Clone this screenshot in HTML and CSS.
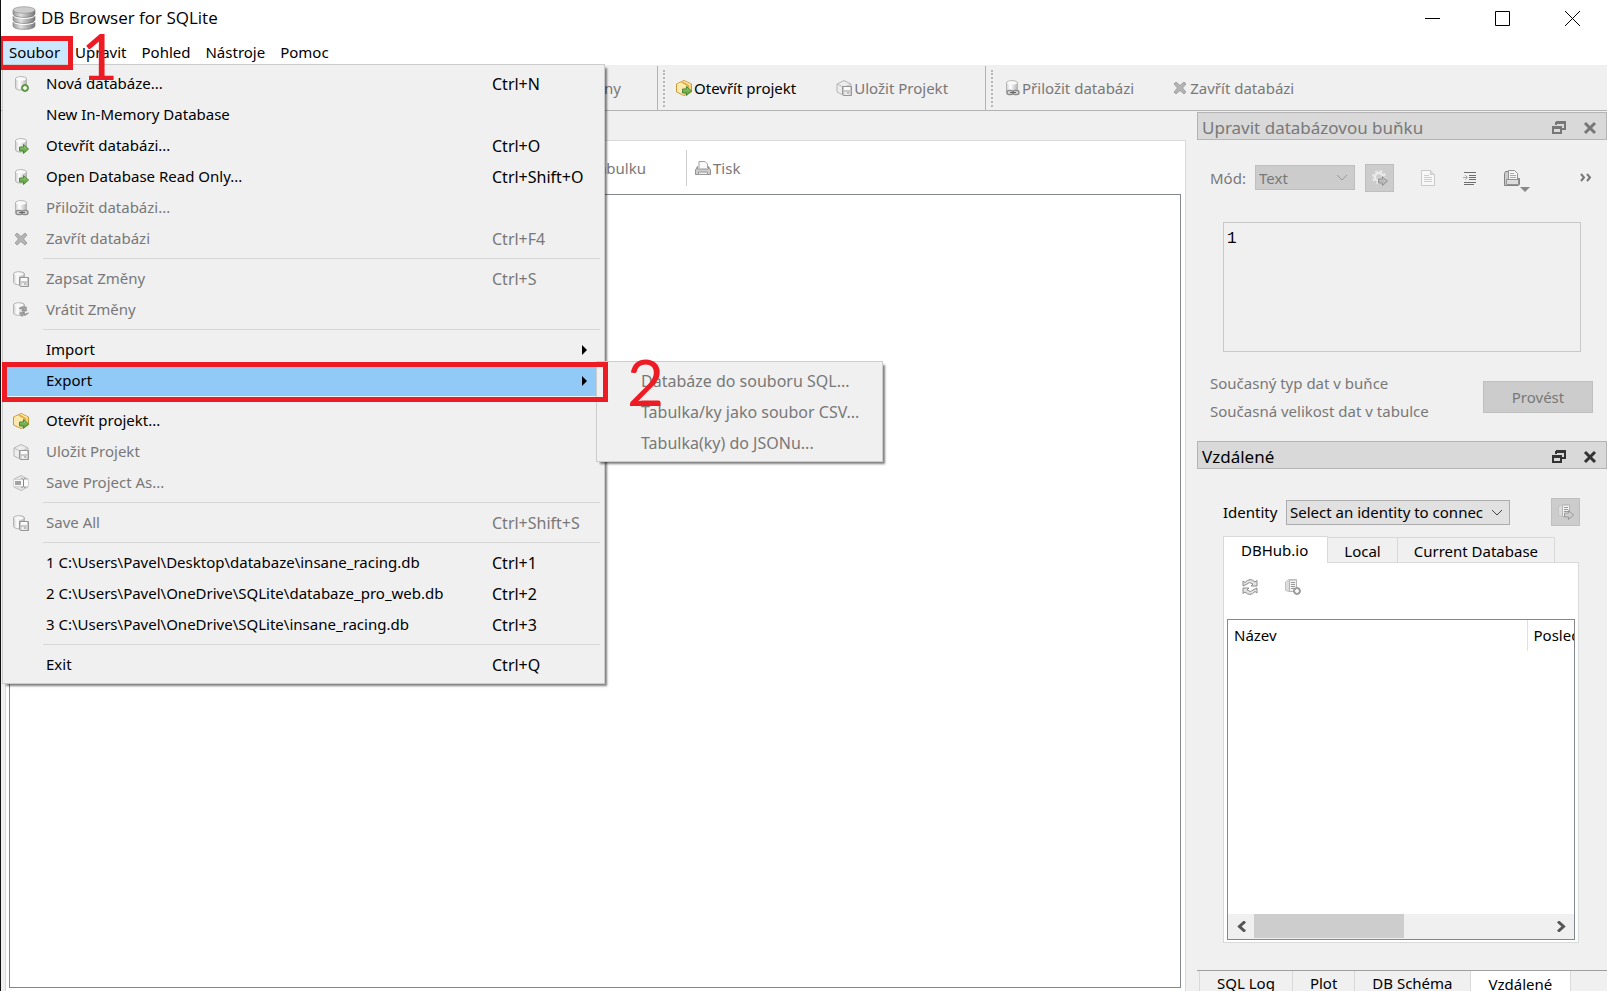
FILE: index.html
```html
<!DOCTYPE html>
<html lang="cs">
<head>
<meta charset="utf-8">
<title>DB Browser for SQLite</title>
<link rel="stylesheet" href="styles.css">
</head>
<body>
<svg class="defs" aria-hidden="true">
  <defs>
    <linearGradient id="metal"><stop offset="0" stop-color="#9a9a9a"/><stop offset=".35" stop-color="#e0e0e0"/><stop offset="1" stop-color="#777"/></linearGradient>
    <linearGradient id="pale"><stop offset="0" stop-color="#d0d0d0"/><stop offset=".35" stop-color="#fff"/><stop offset="1" stop-color="#b4b4b4"/></linearGradient>
    <linearGradient id="green" x2="0" y2="1"><stop offset="0" stop-color="#9ccb7c"/><stop offset="1" stop-color="#4f9a35"/></linearGradient>
    <symbol id="cyl" viewBox="0 0 16 16"><path d="M2.500 2.800v9c0 3 11 3 11 0v-9c0-2.800-11-2.800-11 0z" fill="url(#pale)" stroke="#b4b4b4"/><ellipse cx="8" cy="3" rx="5" ry="1.700" fill="#fafafa"/></symbol>
    <symbol id="arrow" viewBox="0 0 16 16"><path d="M6.500 9h4V6.500l5 4.500-5 4.500V13h-4z" fill="url(#green)" stroke="#4a8a36"/></symbol>
    <symbol id="floppy" viewBox="0 0 16 16"><path d="M6.500 6.500h9v9h-8l-1-1z" fill="#c9c9c9" stroke="#969696"/><path d="M8 7h6v3H8z" fill="#fafafa"/><path d="M8.500 12h5v3h-5z" fill="#eee"/><path d="M11.500 12h1v2h-1z" fill="#888"/></symbol>
    <symbol id="db-new" viewBox="0 0 16 16"><use href="#cyl"/><circle cx="12" cy="12" r="3.400" fill="#79ad5c" stroke="#4d8237"/><path d="M12 10v4m-2-2h4" stroke="#fff" stroke-width="1.400"/></symbol>
    <symbol id="db-open" viewBox="0 0 16 16"><use href="#cyl"/><use href="#arrow"/></symbol>
    <symbol id="db-link" viewBox="0 0 16 16"><use href="#cyl"/><g fill="#ddd" stroke="#8c8c8c" stroke-width="1.400"><rect x="3" y="10.500" width="6" height="4" rx="2"/><rect x="9" y="10.500" width="6" height="4" rx="2"/></g><path d="M6 12.500h6" stroke="#666"/></symbol>
    <symbol id="db-save" viewBox="0 0 16 16"><path d="M.5 3v8.500c1 2 3 2 6 2.500V6h5V3c0-3-11-3-11 0z" fill="url(#pale)" stroke="#b4b4b4"/><ellipse cx="6" cy="3" rx="4.500" ry="1.500" fill="#f8f8f8"/><use href="#floppy"/></symbol>
    <symbol id="db-revert" viewBox="0 0 16 16"><path d="M.5 3v8.500c1 2 9 3 11 0V3c0-3-11-3-11 0z" fill="url(#pale)" stroke="#b4b4b4"/><ellipse cx="6" cy="3" rx="4.500" ry="1.500" fill="#f8f8f8"/><path d="M6 6.500q4-3 6-.5l1-1.500.5 4.500-4.500-.5 1.500-1Q8 6 6 6.500zM15.500 11q-3 3.500-6 2l-.5 1.500-2.500-3.500 4.500-1-.5 1.500q2 1 5-.5z" fill="#a8a8a8" stroke="#848484" stroke-width=".7"/></symbol>
    <symbol id="cross" viewBox="0 0 16 16"><path d="M2 4 4 2l4 3.500L12 2l2 2-3.500 4L14 12l-2 2-4-3.500L4 14l-2-2 3.500-4z" fill="#b4b4b4" stroke="#959595" stroke-width=".8"/></symbol>
    <symbol id="box-open" viewBox="0 0 16 16"><path d="M8 .5 15.500 4v8L8 15.500.5 12V4z" fill="#f6d47c" stroke="#c99b35"/><path d="M1 4.500 8 8v7l-7-3.500z" fill="#fce9b2"/><path d="M1 4.200 8 1l7 3.200L8 8z" fill="#ffebb0"/><path d="m5 2.500 6 3.500v3l2-1V5L7 1.600z" fill="#e3ad43"/><use href="#arrow"/></symbol>
    <symbol id="box-save" viewBox="0 0 16 16"><path d="M8 .5 15 4v8l-7 3.500L1 12V4z" fill="#ededed" stroke="#b5b5b5"/><path d="m1 4 7 3.500L15 4M8 7v8" fill="none" stroke="#bcbcbc"/><use href="#floppy"/></symbol>
    <symbol id="box-edit" viewBox="0 0 16 16"><path d="M8 .5 15 4v8l-7 3.500L1 12V4z" fill="#e4e4e4" stroke="#bcbcbc"/><path d="M.5 4.500h15v7H.5z" fill="#fafafa" stroke="#d2d2d2"/><path d="M2 6h6v4H2z" fill="#a2a2a2"/><path d="M8.500 3.500h1l1 1 1-1h1m-2 1v7m-2 1h1l1-1 1 1h1" fill="none" stroke="#878787"/></symbol>
    <symbol id="printer" viewBox="0 0 16 16"><path d="M4 8V1.500h6l2.500 2.500v4" fill="#fafafa" stroke="#a0a0a0"/><path d="M2.500 6.500.5 10v4.500h15V10l-2-3.500V9h-11z" fill="#cecece" stroke="#929292"/><path d="M3.500 12h9v2.500h-9z" fill="#eee" stroke="#999"/></symbol>
    <symbol id="page" viewBox="0 0 16 16"><path d="M1.500.5h9l4 4v11h-13z" fill="#f8f8f8" stroke="#cacaca"/><path d="M10.500.5v4h4" fill="#ddd" stroke="#cacaca"/><path d="M4 5.500h5m-5 2h8m-8 2h8m-8 2h8" stroke="#cdcdcd"/></symbol>
    <symbol id="indent" viewBox="0 0 16 16"><path d="M2 2.500h12m-7 3h7m-7 2h7m-7 2h7m-12 3h12m-12 2h10" stroke="#6d6d6d" stroke-width="1.200"/><path d="M1 7.500h4M3 5l2.500 2.500L3 10" fill="none" stroke="#aaa"/></symbol>
    <symbol id="folder-print" viewBox="0 0 16 16"><path d="M.5 15.500v-12l1-2h4v7h10v6l-1 1z" fill="#ccc" stroke="#838383"/><path d="M4.500 9.500v-9h6l3 3v6" fill="#f7f7f7" stroke="#929292"/><path d="M6 3.500h4m-4 2h6m-6 2h6" stroke="#aaa"/><path d="M2.500 9.500h12v5h-12z" fill="#ddd" stroke="#929292"/></symbol>
    <symbol id="gear" viewBox="0 0 16 16"><circle cx="7" cy="7" r="6" fill="none" stroke="#e8e8e8" stroke-width="2" stroke-dasharray="2.700 2"/><circle cx="7" cy="7" r="4" fill="#d0d0d0" stroke="#eee" stroke-width="2"/><path d="M6.500 9h4V6.500l5 4.500-5 4.500V13h-4z" fill="#bbb" stroke="#929292"/></symbol>
    <symbol id="server" viewBox="0 0 16 16"><path d="M.5 3 4 .5h7.500v12H4l-3.500-1z" fill="#dcdcdc" stroke="#c2c2c2"/><path d="M4.500 1h7v11.500h-7z" fill="#f1f1f1" stroke="#b4b4b4"/><path d="M6 3.500h4m-4 2h4m-4 2h4m-4 2h3" stroke="#999"/></symbol>
    <symbol id="server-open" viewBox="0 0 16 16"><use href="#server"/><path d="M6.500 9h4V6.500l5 4.500-5 4.500V13h-4z" fill="#ccc" stroke="#999"/></symbol>
    <symbol id="server-add" viewBox="0 0 16 16"><use href="#server"/><circle cx="12" cy="12" r="3.400" fill="#aaa" stroke="#909090"/><path d="M12 10v4m-2-2h4" stroke="#fff" stroke-width="1.500"/></symbol>
    <symbol id="refresh" viewBox="0 0 16 16"><path d="M1 7V2l2 1.500Q8-2 13 3l2-1.500V7H9l2-2Q7 2 5 5zM15 9v5l-2-1.500Q8 18 3 13l-2 1.500V9h6l-2 2q4 3 6 0z" fill="#e4e4e4" stroke="#8c8c8c"/></symbol>
    <symbol id="float" viewBox="0 0 14 14"><path d="M4 1h9v7H9M4 1v3m0-2h9" fill="none" stroke="currentColor" stroke-width="2"/><path d="M1 6h8v6H1zM1 7h8" fill="none" stroke="currentColor" stroke-width="2"/></symbol>
    <symbol id="close" viewBox="0 0 14 14"><path d="m2 2 10 10M12 2 2 12" stroke="currentColor" stroke-width="3"/></symbol>
  </defs>
</svg>

<div class="window">
  <header class="titlebar">
    <svg class="logo" viewBox="0 0 24 24"><g fill="url(#metal)" stroke="#777" stroke-width=".6"><path d="M1 16v4c0 4.500 22 4.500 22 0v-4z"/><path d="M1 10v4c0 4.500 22 4.500 22 0v-4z"/><path d="M1 4v4c0 4.500 22 4.500 22 0V4z"/></g><path d="M1 9.500c2 4 20 4 22 0M1 15.500c2 4 20 4 22 0" fill="none" stroke="#fff"/><ellipse cx="12" cy="4" rx="11" ry="3.300" fill="#ccc" stroke="#8a8a8a" stroke-width=".6"/></svg>
    <h1 class="title">DB Browser for SQLite</h1>
    <div class="winbtns">
      <button class="winbtn" aria-label="Minimalizovat"><svg viewBox="0 0 15 15"><path d="M0 7.500h15"/></svg></button>
      <button class="winbtn" aria-label="Maximalizovat"><svg viewBox="0 0 15 15"><path d="M.5.5h14v14H.5z"/></svg></button>
      <button class="winbtn" aria-label="Zavřít"><svg viewBox="0 0 15 15"><path d="m0 0 15 15M15 0 0 15"/></svg></button>
    </div>
  </header>
  <nav class="menubar">
    <button class="menubtn open">Soubor</button>
    <button class="menubtn">Upravit</button>
    <button class="menubtn">Pohled</button>
    <button class="menubtn">Nástroje</button>
    <button class="menubtn">Pomoc</button>
  </nav>
  <div class="toolbar">
    <div class="group first"><button class="tool" disabled>Vrátit Změny</button></div>
    <div class="group project">
      <button class="tool"><svg class="ico"><use href="#box-open"/></svg>Otevřít projekt</button>
      <button class="tool" disabled><svg class="ico"><use href="#box-save"/></svg>Uložit Projekt</button>
    </div>
    <div class="group attach">
      <button class="tool" disabled><svg class="ico"><use href="#db-link"/></svg>Přiložit databázi</button>
      <button class="tool" disabled><svg class="ico"><use href="#cross"/></svg>Zavřít databázi</button>
    </div>
  </div>

  <div class="body">
    <main class="pane">
      <div class="panebar">
        <div class="panefirst"><button class="tool" disabled>Upravit tabulku</button></div>
        <button class="tool" disabled><svg class="ico"><use href="#printer"/></svg>Tisk</button>
      </div>
      <div class="tree"></div>
    </main>

    <aside class="docks">
      <section class="dock off">
        <h2 class="dockhead"><span class="docktitle">Upravit databázovou buňku</span>
          <button class="dockbtn" aria-label="Uvolnit"><svg><use href="#float"/></svg></button><button class="dockbtn" aria-label="Zavřít panel"><svg><use href="#close"/></svg></button></h2>
        <div class="moderow">
          <label for="mode">Mód:</label>
          <span class="combo mode"><select id="mode" disabled><option>Text</option></select><svg class="chev" viewBox="0 0 12 7"><path d="m1 1 5 5 5-5"/></svg></span>
          <button class="sq" disabled aria-label="Použít režim"><svg class="ico"><use href="#gear"/></svg></button>
          <div class="cellicons">
            <button class="flat" disabled aria-label="Stránka"><svg class="ico"><use href="#page"/></svg></button>
            <button class="flat" disabled aria-label="Odsazení"><svg class="ico"><use href="#indent"/></svg></button>
            <button class="flat" disabled aria-label="Tisk buňky"><svg class="ico"><use href="#folder-print"/></svg><svg class="drop" viewBox="0 0 10 6"><path d="M0 0h10L5 5z"/></svg></button>
          </div>
          <button class="flat more" disabled aria-label="Další"><svg viewBox="0 0 12 9"><path d="m1 1 3 3.500L1 8m6-7 3 3.500L7 8"/></svg></button>
        </div>
        <textarea class="cell" aria-label="Hodnota buňky" readonly>1</textarea>
        <div class="applyrow">
          <div class="info"><p>Současný typ dat v buňce</p><p>Současná velikost dat v tabulce</p></div>
          <button class="apply" disabled>Provést</button>
        </div>
      </section>

      <section class="dock remote">
        <h2 class="dockhead"><span class="docktitle">Vzdálené</span>
          <button class="dockbtn" aria-label="Uvolnit"><svg><use href="#float"/></svg></button><button class="dockbtn" aria-label="Zavřít panel"><svg><use href="#close"/></svg></button></h2>
        <div class="idrow">
          <label for="ident">Identity</label>
          <span class="combo ident"><select id="ident"><option>Select an identity to connect</option></select><svg class="chev" viewBox="0 0 12 7"><path d="m1 1 5 5 5-5"/></svg></span>
          <button class="sq" disabled aria-label="Nahrát"><svg class="ico"><use href="#server-open"/></svg></button>
        </div>
        <div class="tabs">
          <button class="tab active">DBHub.io</button><button class="tab">Local</button><button class="tab">Current Database</button>
        </div>
        <div class="tabpane">
          <div class="remotebar">
            <button class="flat" disabled aria-label="Obnovit"><svg class="ico"><use href="#refresh"/></svg></button>
            <button class="flat" disabled aria-label="Klonovat"><svg class="ico"><use href="#server-add"/></svg></button>
          </div>
          <div class="list">
            <div class="listview"><table><thead><tr><th class="name">Název</th><th>Poslední</th></tr></thead></table></div>
            <div class="scroll">
              <button class="sbtn" aria-label="Doleva"><svg viewBox="0 0 9 11"><path d="M8 .5 2.500 5.500 8 10.500"/></svg></button>
              <div class="track"><div class="thumb"></div></div>
              <button class="sbtn" aria-label="Doprava"><svg viewBox="0 0 9 11"><path d="m1 .5 5.500 5L1 10.500"/></svg></button>
            </div>
          </div>
        </div>
      </section>
      <div class="bottomtabs">
        <button class="btab">SQL Log</button><button class="btab">Plot</button><button class="btab">DB Schéma</button><button class="btab active">Vzdálené</button>
      </div>
    </aside>
  </div>

  <div class="popup file" role="menu">
    <button class="item"><svg class="ico"><use href="#db-new"/></svg><span class="lbl">Nová databáze...</span><span class="key">Ctrl+N</span></button>
    <button class="item"><span class="lbl">New In-Memory Database</span></button>
    <button class="item"><svg class="ico"><use href="#db-open"/></svg><span class="lbl">Otevřít databázi...</span><span class="key">Ctrl+O</span></button>
    <button class="item"><svg class="ico"><use href="#db-open"/></svg><span class="lbl">Open Database Read Only...</span><span class="key">Ctrl+Shift+O</span></button>
    <button class="item" disabled><svg class="ico"><use href="#db-link"/></svg><span class="lbl">Přiložit databázi...</span></button>
    <button class="item" disabled><svg class="ico"><use href="#cross"/></svg><span class="lbl">Zavřít databázi</span><span class="key">Ctrl+F4</span></button>
    <hr>
    <button class="item" disabled><svg class="ico"><use href="#db-save"/></svg><span class="lbl">Zapsat Změny</span><span class="key">Ctrl+S</span></button>
    <button class="item" disabled><svg class="ico"><use href="#db-revert"/></svg><span class="lbl">Vrátit Změny</span></button>
    <hr>
    <button class="item"><span class="lbl">Import</span><svg class="sub" viewBox="0 0 5 10"><path d="m0 0 5 5-5 5z"/></svg></button>
    <button class="item hover"><span class="lbl">Export</span><svg class="sub" viewBox="0 0 5 10"><path d="m0 0 5 5-5 5z"/></svg></button>
    <hr>
    <button class="item"><svg class="ico"><use href="#box-open"/></svg><span class="lbl">Otevřít projekt...</span></button>
    <button class="item" disabled><svg class="ico"><use href="#box-save"/></svg><span class="lbl">Uložit Projekt</span></button>
    <button class="item" disabled><svg class="ico"><use href="#box-edit"/></svg><span class="lbl">Save Project As...</span></button>
    <hr>
    <button class="item" disabled><svg class="ico"><use href="#db-save"/></svg><span class="lbl">Save All</span><span class="key">Ctrl+Shift+S</span></button>
    <hr>
    <button class="item"><span class="lbl">1 C:\Users\Pavel\Desktop\databaze\insane_racing.db</span><span class="key">Ctrl+1</span></button>
    <button class="item"><span class="lbl">2 C:\Users\Pavel\OneDrive\SQLite\databaze_pro_web.db</span><span class="key">Ctrl+2</span></button>
    <button class="item"><span class="lbl">3 C:\Users\Pavel\OneDrive\SQLite\insane_racing.db</span><span class="key">Ctrl+3</span></button>
    <hr>
    <button class="item"><span class="lbl">Exit</span><span class="key">Ctrl+Q</span></button>
  </div>
  <div class="popup export" role="menu">
    <button class="item" disabled><span class="lbl">Databáze do souboru SQL...</span></button>
    <button class="item" disabled><span class="lbl">Tabulka/ky jako soubor CSV...</span></button>
    <button class="item" disabled><span class="lbl">Tabulka(ky) do JSONu...</span></button>
  </div>
  <div class="mark mark1"></div><span class="num num1">1</span>
  <div class="mark mark2"></div><span class="num num2">2</span>
</div>
</body>
</html>
```
FILE: styles.css
```css
* { box-sizing: border-box; }
body {
  margin: 0;
  font: 15px/20px "Noto Sans", sans-serif;
  color: #000;
  background: #f0f0f0;
}
button, select, textarea { font: inherit; color: inherit; margin: 0; }
button { background: none; border: 0; padding: 0; white-space: nowrap; }
h1, h2, p { margin: 0; font-weight: 400; }
svg { display: block; flex: none; }
.defs { position: absolute; width: 0; height: 0; }
.ico { width: 16px; height: 16px; }

.window {
  position: relative;
  display: flex;
  flex-direction: column;
  height: 100vh;
  overflow: hidden;
  border-left: 1px solid #111;
}

/* title bar and menu bar */
.titlebar { display: flex; align-items: center; height: 36px; padding-left: 11px; background: #fff; }
.logo { width: 24px; height: 24px; }
.title { flex: 1; margin-left: 5px; font: 17px/24px "Open Sans", sans-serif; }
.winbtns { display: flex; }
.winbtn { display: flex; justify-content: center; align-items: center; width: 70px; height: 34px; }
.winbtn svg { width: 15px; height: 15px; fill: none; stroke: #000; }
.menubar { display: flex; height: 30px; background: #fff; border-bottom: 1px solid #eee; }
.menubtn { padding: 3px 8px 0; height: 29px; }
.menubtn + .menubtn { padding-left: 7px; }
.menubtn.open { background: #cce8ff; border-bottom: 1px solid #99d1ff; }

/* tool bar */
.toolbar { display: flex; height: 45px; border-bottom: 1px solid #b3b3b3; }
.group { display: flex; align-items: center; gap: 40px; }
.tool { display: flex; align-items: center; gap: 2px; }
.tool:disabled { color: #787878; }
.first { flex: 0 0 657px; justify-content: flex-end; padding-right: 36px; border-right: 1px solid #b3b3b3; }
.project, .attach { position: relative; padding-left: 18px; }
.project { flex: 0 0 328px; border-right: 1px solid #b3b3b3; }
.attach { gap: 38px; }
.project::before, .attach::before {
  content: "";
  position: absolute;
  left: 5px;
  top: 4px;
  bottom: 3px;
  border-left: 2px dotted #b8b8b8;
}

.body { flex: 1; min-height: 0; display: flex; }
.pane {
  flex: 1;
  display: flex;
  flex-direction: column;
  margin: 29px 11px 0 4px;
  padding: 0 4px 3px 3px;
  background: #fff;
  border: 1px solid #d9d9d9;
  border-bottom: 0;
}
.panebar { display: flex; align-items: center; height: 53px; }
.panefirst { display: flex; align-items: center; justify-content: flex-end; flex: 0 0 678px; height: 36px; margin-right: 8px; padding-right: 40px; border-right: 1px solid #d0d0d0; }
.tree { flex: 1; border: 1px solid #828790; }

/* docks */
.docks { flex: 0 0 410px; min-width: 0; display: flex; flex-direction: column; }
.dock.off { color: #787878; height: 330px; padding-top: 1px; }
.dockhead { display: flex; align-items: center; height: 28px; padding: 3px 9px 0 4px; background: #d9d9d9; border: 1px solid #b4b4b4; font-size: 17px; }
.docktitle { flex: 1; }
.dockbtn { margin-left: 17px; color: #333; }
.off .dockbtn { color: #777; }
.dockbtn svg { width: 14px; height: 14px; }
.moderow { display: flex; align-items: center; margin-top: 23px; padding: 0 15px 0 13px; height: 29px; }
.moderow label { width: 45px; }
.combo { position: relative; display: block; height: 25px; }
.combo select { width: 100%; height: 25px; padding: 0 26px 0 3px; appearance: none; border: 1px solid #adadad; border-radius: 0; background: #e1e1e1; line-height: 20px; overflow: hidden; }
.combo select:disabled { background: #ccc; border-color: #bfbfbf; opacity: 1; color: #787878; }
.chev { position: absolute; right: 7px; top: 9px; width: 12px; height: 7px; fill: none; stroke: #444; }
.mode { width: 100px; margin-right: 10px; }
.mode .chev { stroke: #999; }
.sq { display: flex; justify-content: center; align-items: center; width: 29px; height: 28px; background: #ccc; border: 1px solid #bfbfbf; }
.flat { position: relative; }
.cellicons { display: flex; gap: 26px; margin-left: 26px; }
.drop { position: absolute; left: 16px; top: 17px; width: 10px; height: 6px; fill: #888; }
.more { margin-left: auto; }
.more svg { width: 12px; height: 9px; fill: none; stroke: #777; stroke-width: 2; }
.cell { display: block; width: calc(100% - 52px); height: 130px; margin: 30px 26px 0; padding: 6px 3px; resize: none; background: #f0f0f0; border: 1px solid #c8c8c8; border-radius: 0; color: #000; font: 16px/20px "Liberation Mono", monospace; outline: 0; }
.applyrow { display: flex; justify-content: space-between; margin-top: 18px; padding: 0 14px 0 13px; }
.info { padding-top: 3px; }
.info p { height: 28px; }
.apply { width: 110px; height: 32px; margin-top: 11px; background: #ccc; border: 1px solid #bfbfbf; color: #787878; }
.remote { flex: 1; min-height: 0; display: flex; flex-direction: column; }
.remote .dockhead { flex: none; }
.idrow { display: flex; align-items: center; margin: 28px 27px 0 26px; height: 30px; }
.idrow label { width: 63px; }
.ident { width: 224px; margin-right: auto; }
.tabs { display: flex; align-items: flex-end; height: 35px; margin: 0 26px; }
.tab { height: 25px; padding: 2px 16px 0; border: 1px solid #d9d9d9; border-width: 1px 1px 0 0; }
.tab.active { height: 27px; padding: 0 19px 1px 17px; margin-bottom: -1px; background: #fff; border-left-width: 1px; z-index: 1; }
.tabpane { flex: 1; min-height: 0; display: flex; flex-direction: column; margin: 0 28px 27px 26px; padding: 0 3px 2px; background: #fff; border: 1px solid #d9d9d9; }
.remotebar { display: flex; gap: 27px; padding: 16px 0 0 15px; height: 56px; }
.remotebar .flat { height: 16px; }
.list { flex: 1; min-height: 0; display: flex; flex-direction: column; border: 1px solid #828790; }
.listview { flex: 1; overflow: hidden; }
.listview table { width: 450px; border-collapse: collapse; table-layout: fixed; }
.listview th { height: 31px; padding: 0 6px 1px; text-align: left; font-weight: 400; }
.listview .name { width: 299px; border-right: 1px solid #e0e0e0; }
.scroll { display: flex; height: 25px; padding-bottom: 1px; background: #f0f0f0; }
.sbtn { display: flex; align-items: center; justify-content: center; width: 26px; }
.sbtn svg { width: 9px; height: 11px; fill: none; stroke: #555; stroke-width: 3; }
.track { flex: 1; }
.thumb { width: 51%; height: 100%; background: #cdcdcd; }
.bottomtabs { display: flex; height: 21px; overflow: hidden; padding-left: 2px; border-top: 1px solid #a0a0a0; }
.btab { height: 24px; flex: none; padding: 0 17px; border-left: 1px solid #d9d9d9; }
.btab.active { position: relative; margin-top: -1px; height: 27px; padding: 0 18px; background: #fff; border-right: 1px solid #d9d9d9; }

/* drop-down menus */
.popup { position: absolute; padding: 3px; background: #f0f0f0; border: 1px solid #ccc; box-shadow: 3px 3px 2px -1px rgba(0, 0, 0, .5); }
.item { display: flex; align-items: center; width: 100%; height: 31px; padding-left: 40px; text-align: left; }
.item:disabled { color: #787878; }
.item .ico { margin: 0 17px 0 -33px; }
.lbl { flex: 1; padding-bottom: 1px; }
.key { width: 109px; font-size: 16px; }
.sub { width: 5px; height: 10px; margin-right: 14px; }
.item.hover { background: #91c9f7; }
.popup hr { height: 1px; margin: 4px 1px 4px 37px; border: 0; background: #d7d7d7; }
.file { left: 1px; top: 64px; width: 603px; }
.export { left: 595px; top: 361px; width: 287px; }
.export .item { padding-left: 41px; font-size: 16px; }
.export .lbl { padding-bottom: 0; }

/* numbered highlights */
.mark { position: absolute; border: 5px solid #ed1c24; }
.mark1 { left: -3px; top: 36px; width: 75px; height: 34px; }
.mark2 { left: 1px; top: 362px; width: 606px; height: 40px; }
.num { position: absolute; font: 64px/64px Lato, sans-serif; color: #ed1c24; }
.num1 { left: 80px; top: 24px; }
.num2 { left: 626px; top: 350px; }
```
